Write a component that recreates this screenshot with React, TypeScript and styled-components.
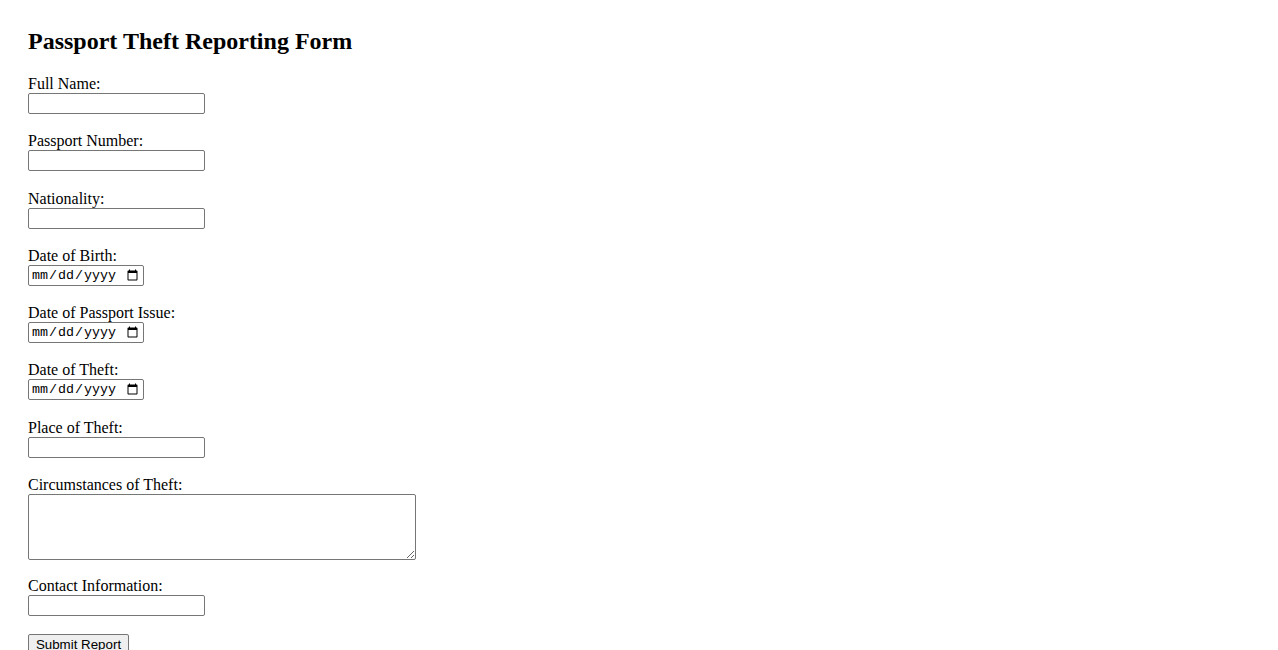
import React from 'react';
import styled, { createGlobalStyle } from 'styled-components';

const GlobalStyle = createGlobalStyle`
  html, body {
    margin: 0;
    padding: 0;
    background: #ffffff;
  }
  body {
    padding: 27.5px 28px;
    font-family: "Liberation Serif", "Times New Roman", serif;
    font-size: 16px;
    color: #000000;
  }
`;

const Title = styled.h2`
  font-size: 24px;
  font-weight: bold;
  margin: 0 0 20.5px 0;
  line-height: 27px;
`;

const Form = styled.form`
  display: flex;
  flex-direction: column;
  align-items: flex-start;
  gap: 18.3px;
`;

const Field = styled.div<{ $tall?: boolean }>`
  display: flex;
  flex-direction: column;
  align-items: flex-start;
  margin-bottom: ${p => (p.$tall ? '-1.2px' : '0')};
`;

const Label = styled.label`
  display: block;
  height: 18px;
  line-height: 18px;
`;

const inputBase = `
  box-sizing: border-box;
  border: 1px solid #767676;
  border-radius: 2px;
  background: #ffffff;
  margin: 0;
  padding: 1px 2px;
  font-size: 13.33px;
  color: #000000;
`;

const TextInput = styled.input<{ $kind?: 'text' | 'date' }>`
  ${inputBase}
  width: ${p => (p.$kind === 'date' ? '116px' : '177px')};
  height: 21px;
  font-family: ${p => (p.$kind === 'date' ? '"Liberation Mono", "DejaVu Sans Mono", monospace' : '"Liberation Sans", Arial, sans-serif')};
`;

const TextArea = styled.textarea`
  ${inputBase}
  width: 388px;
  height: 66px;
  resize: both;
  font-family: "Liberation Mono", monospace;
`;

const SubmitButton = styled.button`
  box-sizing: border-box;
  width: 101px;
  height: 21px;
  margin: 0;
  padding: 1px 6px;
  border: 1px solid #767676;
  border-radius: 2px;
  background: #efefef;
  color: #000000;
  font-family: "Liberation Sans", Arial, sans-serif;
  font-size: 13.33px;
`;

type FieldDef = { id: string; label: string; kind: 'text' | 'date' | 'area' };

const fields: FieldDef[] = [
  { id: 'fullName', label: 'Full Name:', kind: 'text' },
  { id: 'passportNumber', label: 'Passport Number:', kind: 'text' },
  { id: 'nationality', label: 'Nationality:', kind: 'text' },
  { id: 'dob', label: 'Date of Birth:', kind: 'date' },
  { id: 'issueDate', label: 'Date of Passport Issue:', kind: 'date' },
  { id: 'theftDate', label: 'Date of Theft:', kind: 'date' },
  { id: 'place', label: 'Place of Theft:', kind: 'text' },
  { id: 'circumstances', label: 'Circumstances of Theft:', kind: 'area' },
  { id: 'contact', label: 'Contact Information:', kind: 'text' },
];

export default function App() {
  return (
    <>
      <GlobalStyle />
      <Title>Passport Theft Reporting Form</Title>
      <Form onSubmit={e => e.preventDefault()}>
        {fields.map(f => (
          <Field key={f.id} $tall={f.kind === 'area'}>
            <Label htmlFor={f.id}>{f.label}</Label>
            {f.kind === 'area' ? (
              <TextArea id={f.id} />
            ) : (
              <TextInput id={f.id} type={f.kind} $kind={f.kind} />
            )}
          </Field>
        ))}
        <SubmitButton type="submit">Submit Report</SubmitButton>
      </Form>
    </>
  );
}
